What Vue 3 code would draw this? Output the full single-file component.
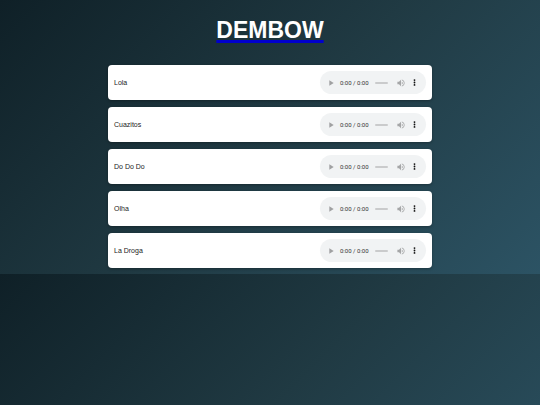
<script setup>
import { ref } from 'vue';

const songs = ref([
  { id: 1, name: 'Lola', position: 0 },
  { id: 2, name: 'Cuazitos', position: 0 },
  { id: 3, name: 'Do Do Do', position: 0 },
  { id: 4, name: 'Olha', position: 0 },
  { id: 5, name: 'La Droga', position: 0 }
]);
</script>

<template>
  <main class="playlist">
    <a class="playlist__link" href="#">
      <h1 class="playlist__title">DEMBOW</h1>
    </a>

    <ul class="playlist__songs">
      <li v-for="song in songs" :key="song.id" class="song">
        <span class="song__name">{{ song.name }}</span>

        <div class="player" role="group" :aria-label="song.name">
          <button type="button" class="player__button" aria-label="Play" disabled>
            <svg width="5" height="6" viewBox="0 0 5 6">
              <path d="M0.300 0.300v5.400l4.400-2.700z" fill="#a0a1a2" />
            </svg>
          </button>
          <span class="player__time">0:00 / 0:00</span>
          <input
            v-model="song.position"
            class="player__seek"
            type="range"
            min="0"
            max="100"
            aria-label="Seek"
            disabled
          />
          <button type="button" class="player__button player__button--volume" aria-label="Mute" disabled>
            <svg width="8" height="8" viewBox="2 2 20 20">
              <path
                d="M3 9v6h4l5 5V4L7 9H3zm13.500 3c0-1.770-1.020-3.290-2.500-4.030v8.050c1.480-.730 2.500-2.250 2.500-4.020zM14 3.230v2.060c2.890.860 5 3.540 5 6.710s-2.110 5.850-5 6.710v2.060c4.010-.910 7-4.490 7-8.770s-2.990-7.860-7-8.770z"
                fill="#a5a6a7"
              />
            </svg>
          </button>
          <button type="button" class="player__button" aria-label="More options">
            <svg width="3" height="7" viewBox="0 0 3 7">
              <circle cx="1.500" cy="1.100" r=".9" fill="#111" />
              <circle cx="1.500" cy="3.500" r=".9" fill="#111" />
              <circle cx="1.500" cy="5.900" r=".9" fill="#111" />
            </svg>
          </button>
        </div>
      </li>
    </ul>
  </main>
</template>

<style>
/* The gradient tiles below the content */
body {
  margin: 0;
  background: linear-gradient(135deg, #0f2027, #203a43, #2c5364);
  font-family: Arial, "Liberation Sans", sans-serif;
}
</style>

<style scoped>
.playlist {
  display: flex;
  flex-direction: column;
  align-items: center;
  padding: 17px 0 6px;
}

.playlist__link {
  text-decoration: none;
}

.playlist__title {
  margin: 0 0 22px;
  font-size: 23px;
  line-height: 26px;
  font-weight: bold;
  text-decoration: underline #0000cd 3px;
  text-underline-offset: 2px;
  text-decoration-skip-ink: none;
  color: #ffffff;
}

.playlist__songs {
  display: flex;
  flex-direction: column;
  gap: 7px;
  width: 60%;
  margin: 0;
  padding: 0;
  list-style: none;
}

.song {
  display: flex;
  align-items: center;
  justify-content: space-between;
  padding: 6px;
  border-radius: 4px;
  background: #ffffff;
  box-shadow: 0 1px 3px rgba(0, 0, 0, 0.3);
}

.song__name {
  font-size: 7px;
  line-height: 8px;
  color: #222222;
}

/* Audio controls */
.player {
  display: flex;
  align-items: center;
  box-sizing: border-box;
  width: 106px;
  height: 23px;
  padding: 0 10px 0 9px;
  border-radius: 12px;
  background: #f1f3f4;
}

.player__button {
  display: flex;
  padding: 0;
  border: none;
  background: none;
}

.player__button--volume {
  margin: 0 8px 0 9px;
}

.player__time {
  margin: 0 6px;
  font-family: Roboto, sans-serif;
  font-size: 6px;
  line-height: 8px;
  white-space: nowrap;
  color: #333333;
}

.player__seek {
  flex: 1;
  min-width: 0;
  height: 2px;
  margin: 0;
  border-radius: 1px;
  background: #cacbcc;
  appearance: none;
}

.player__seek::-webkit-slider-thumb {
  width: 0;
  height: 0;
  appearance: none;
}
</style>
